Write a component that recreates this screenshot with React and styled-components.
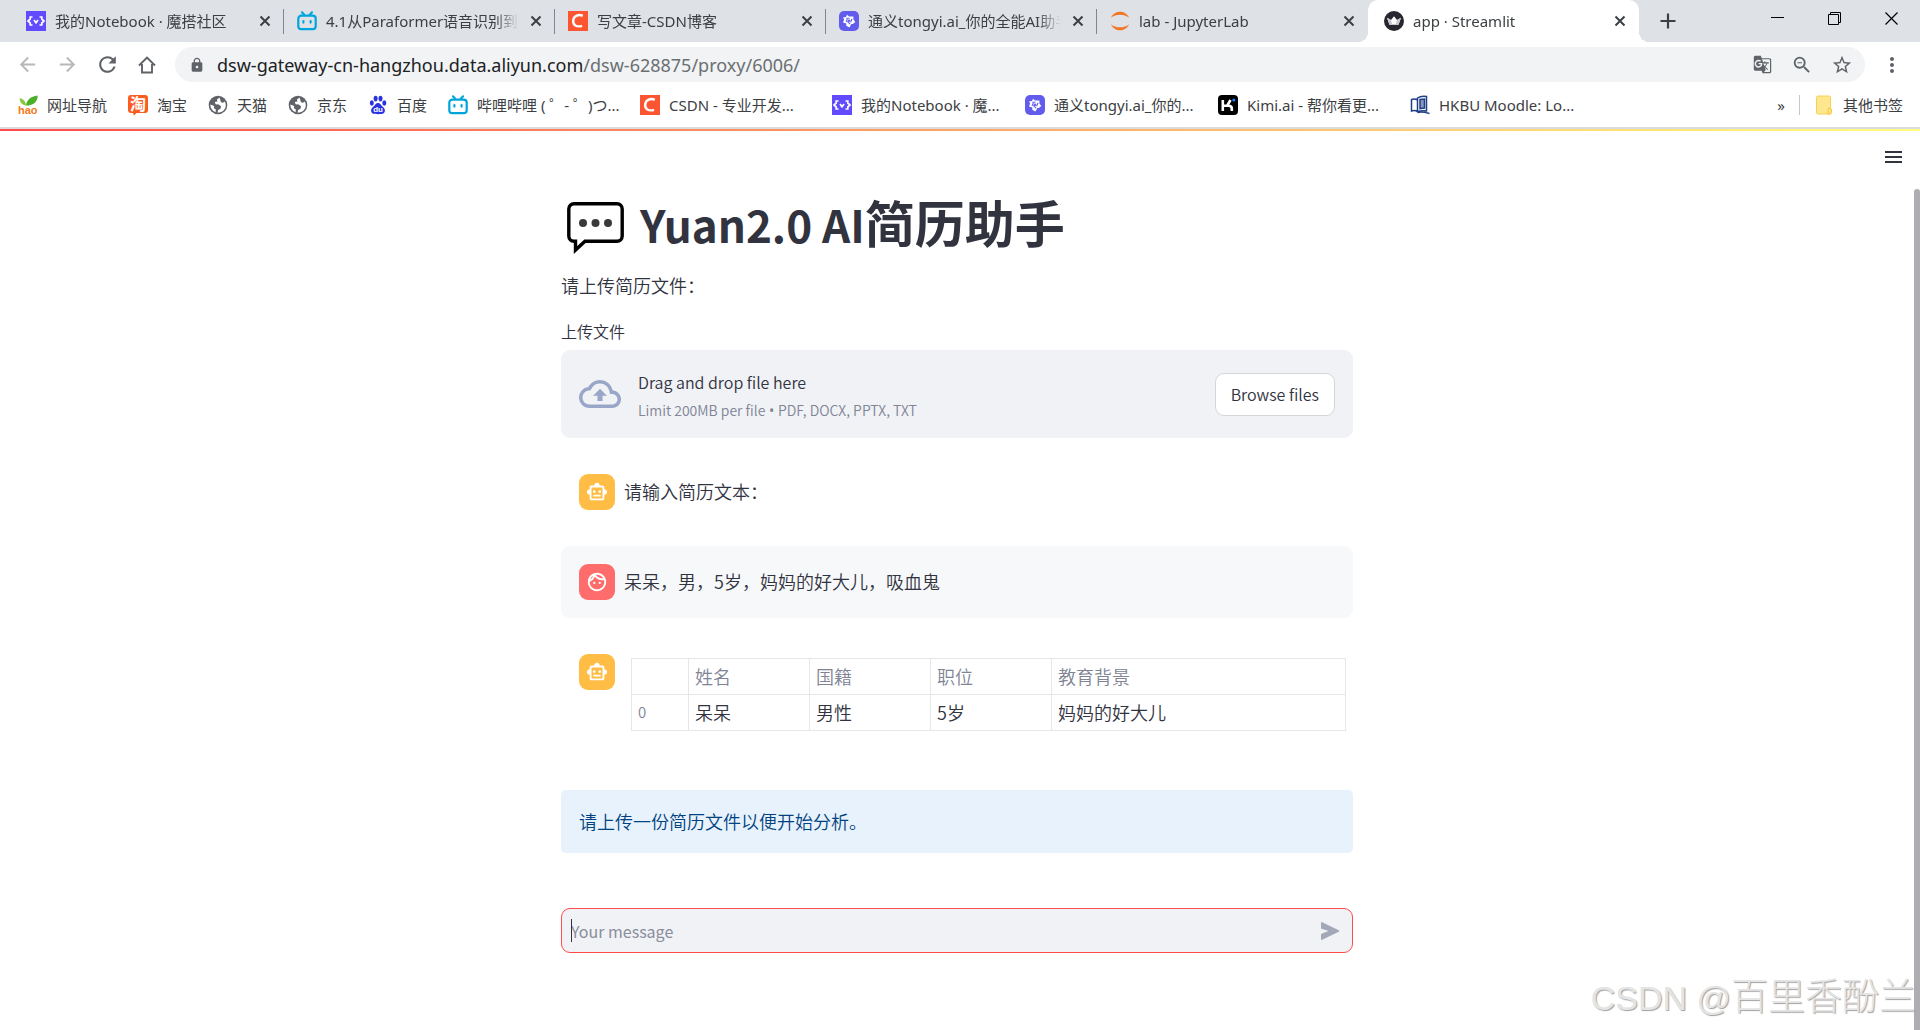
import React from "react";
import styled, { createGlobalStyle, css } from "styled-components";
import {
  MdArrowBack,
  MdArrowForward,
  MdRefresh,
  MdLock,
  MdGTranslate,
  MdZoomOut,
  MdStarBorder,
  MdMoreVert,
  MdOutlineCloudUpload,
  MdOutlineSmartToy,
  MdOutlineFace,
} from "react-icons/md";

const uiFont = '"Noto Sans", "Noto Sans CJK SC", sans-serif';
const appFont = '"Noto Sans CJK SC", sans-serif';

const GlobalStyle = createGlobalStyle`
  * { box-sizing: border-box; }
  body { margin: 0; background: #fff; font-family: ${appFont}; font-weight: 350; color: #31333f; }
  button { padding: 0; border: 0; background: none; color: inherit; font: inherit; cursor: pointer; }
  a { color: inherit; text-decoration: none; }
  svg { display: block; flex: none; overflow: visible; }
`;

/* ---------- browser chrome ---------- */

const Window = styled.div`
  position: relative;
  display: flex;
  flex-direction: column;
  min-height: 100vh;
  overflow: hidden;
`;

const TabStrip = styled.div`
  display: flex;
  align-items: stretch;
  height: 42px;
  padding-left: 13px;
  background: #dee1e6;
  font-family: ${uiFont};
  font-size: 15px;
  font-weight: 400;
  color: #3c4043;
`;

const Tab = styled.div`
  position: relative;
  display: flex;
  align-items: center;
  flex: 0 1 271px;
  min-width: 0;
  padding: 0 11px 0 13px;
  gap: 9px;
  ${(p) =>
    p.$active
      ? css`
          padding-left: 16px;
          background: #fff;
          border-radius: 10px 10px 0 0;
          &::before, &::after {
            content: "";
            position: absolute;
            bottom: 0;
            width: 10px;
            height: 10px;
          }
          &::before {
            left: -10px;
            background: radial-gradient(circle at 0 0, transparent 10px, #fff 10px);
          }
          &::after {
            right: -10px;
            background: radial-gradient(circle at 100% 0, transparent 10px, #fff 10px);
          }
        `
      : css`
          &:not(:nth-last-child(-n + 4))::after {
            content: "";
            position: absolute;
            right: 0;
            top: 9px;
            width: 1px;
            height: 25px;
            background: #80868b;
          }
        `}
`;

const TabTitle = styled.span`
  flex: 1;
  min-width: 0;
  overflow: hidden;
  white-space: nowrap;
  line-height: 24px;
  mask-image: linear-gradient(to right, #000 calc(100% - 24px), transparent);
`;

const TabClose = styled.button`
  display: grid;
  place-items: center;
  width: 16px;
  height: 16px;
`;

const NewTab = styled.button`
  display: grid;
  place-items: center;
  width: 28px;
  margin-left: 15px;
`;

const WindowControls = styled.div`
  display: flex;
  margin-left: auto;
  padding-bottom: 5px;
  color: #000;
`;

const WindowButton = styled.button`
  display: grid;
  place-items: center;
  width: 57px;
`;

const Toolbar = styled.div`
  display: flex;
  align-items: center;
  height: 45px;
  padding: 0 14px;
  color: #5f6368;
`;

const ToolButton = styled.button`
  display: grid;
  place-items: center;
  width: ${(p) => p.$width || 40}px;
  height: 28px;
  opacity: ${(p) => (p.disabled ? 0.45 : 1)};
`;

const NavButtons = styled.div`
  display: flex;
  width: 161px;
  margin-left: -7px;
`;

const AddressBar = styled.div`
  display: flex;
  align-items: center;
  flex: 1;
  height: 35px;
  margin: 0 13px 0 7px;
  padding: 0 3px 0 14px;
  border-radius: 18px;
  background: #f1f3f4;
`;

const Url = styled.div`
  flex: 1;
  margin-left: 12px;
  font-family: ${uiFont};
  font-size: 18px;
  font-weight: 400;
  line-height: 28px;
  white-space: nowrap;
  color: #6b6f73;
  b { font-weight: 400; color: #202124; }
`;

const BookmarkBar = styled.nav`
  display: flex;
  align-items: center;
  height: 42px;
  padding: 0 17px 4px 18px;
  border-bottom: 2px solid #dadce0;
  box-sizing: border-box;
  font-family: ${uiFont};
  font-size: 15px;
  font-weight: 400;
  line-height: 24px;
  color: #3c4043;
`;

const Bookmark = styled.a`
  display: flex;
  align-items: center;
  gap: 9px;
  width: ${(p) => p.$width}px;
  white-space: nowrap;
`;

const Overflow = styled.button`
  display: grid;
  place-items: center;
  width: 20px;
  margin-left: auto;
`;

const OtherBookmarks = styled.a`
  display: flex;
  align-items: center;
  gap: 11px;
  height: 20px;
  margin-left: 8px;
  padding-left: 16px;
  border-left: 1px solid #c4c7cb;
`;

/* ---------- page ---------- */

const GradientBar = styled.div`
  height: 2px;
  background: linear-gradient(90deg, #ff4b4b, #fffd80);
`;

const Viewport = styled.div`
  display: flex;
  flex: 1;
`;

const Page = styled.main`
  flex: 1;
  min-width: 0;
`;

const PageHeader = styled.header`
  display: flex;
  justify-content: flex-end;
  padding: 15px 10px 0;
  height: 60px;
`;

const MenuButton = styled.button`
  display: grid;
  place-items: center;
  width: 22px;
  height: 22px;
`;

const Scrollbar = styled.div`
  display: flex;
  width: 6px;
  padding-top: 58px;
  &::after {
    content: "";
    flex: 1;
    border-radius: 4px 4px 0 0;
    background: #adadb2;
  }
`;

const Column = styled.div`
  max-width: 792px;
  margin: 0 auto;
`;

const Title = styled.h1`
  display: flex;
  align-items: flex-end;
  gap: 16px;
  margin: 0;
  padding-left: 6px;
  font-size: 50px;
  font-weight: 700;
  line-height: 60px;
  white-space: nowrap;
`;

const Latin = styled.span`
  font-size: 44px;
`;

const Intro = styled.p`
  margin: 17px 0 20px;
  font-size: 18px;
  line-height: 28px;
`;

const UploadLabel = styled.label`
  display: block;
  margin-bottom: 7px;
  font-size: 16px;
  line-height: 24px;
`;

const DropZone = styled.section`
  display: flex;
  align-items: center;
  height: 88px;
  padding: 0 18px;
  border-radius: 9px;
  background: #f0f2f6;
  color: #98a6c8;
`;

const DropText = styled.div`
  flex: 1;
  margin-left: 17px;
  padding-top: 4px;
  color: #31333f;
  font-size: 16px;
  line-height: 28px;
  small {
    display: block;
    font-size: 14px;
    line-height: 29px;
    color: #808495;
  }
`;

const Bullet = styled.span`
  font-family: "Noto Sans", sans-serif;
  font-weight: 400;
`;

const BrowseButton = styled.button`
  height: 43px;
  padding: 0 15px;
  border: 1px solid #d5d6d9;
  border-radius: 9px;
  background: #fff;
  color: #31333f;
  font-size: 16px;
`;

const Message = styled.article`
  display: flex;
  align-items: flex-start;
  gap: 9px;
  margin-top: 18px;
  padding: 18px;
  border-radius: 9px;
  background: ${(p) => (p.$user ? "#f7f8fa" : "transparent")};
`;

const Avatar = styled.div`
  display: grid;
  place-items: center;
  flex: none;
  width: 36px;
  height: 36px;
  border-radius: 9px;
  color: #fff;
  background: ${(p) => (p.$user ? "#ff6c6c" : "#ffbd45")};
`;

const MessageText = styled.p`
  margin: 0;
  font-size: 18px;
  line-height: 34px;
`;

const Grid = styled.table`
  flex: 1;
  margin: 4px -11px 0 7px;
  border-collapse: collapse;
  table-layout: fixed;
  font-size: 18px;
  th, td {
    height: 36px;
    padding: 0 6px 2px;
    border: 1px solid #e6e6e8;
    font-weight: 350;
    line-height: 28px;
    text-align: left;
  }
  thead th { color: #808495; }
  tbody th { color: #808495; font-size: 15px; }
`;

const Info = styled.div`
  margin-top: 41px;
  padding: 17px 18px 18px;
  border-radius: 5px;
  background: #e8f2fc;
  color: #004280;
  font-size: 18px;
  line-height: 28px;
`;

const ChatForm = styled.form`
  position: relative;
  display: flex;
  align-items: center;
  height: 45px;
  margin: 55px 0 77px;
  padding: 0 11px 0 9px;
  border: 1px solid #ff4b4b;
  border-radius: 9px;
  background: #f0f2f6;
  &::before {
    content: "";
    position: absolute;
    left: 9px;
    top: 10px;
    width: 1px;
    height: 23px;
    background: #31333f;
  }
`;

const ChatInput = styled.input`
  flex: 1;
  min-width: 0;
  height: 100%;
  padding: 0;
  border: 0;
  outline: 0;
  background: none;
  font: 16px ${appFont};
  color: #31333f;
  &::placeholder { color: #8a8d9b; opacity: 1; }
`;

const Watermark = styled.div`
  position: absolute;
  right: 4px;
  bottom: 8px;
  font-family: "Liberation Sans", "Noto Sans CJK SC", sans-serif;
  font-size: 37px;
  font-weight: 300;
  line-height: 48px;
  white-space: nowrap;
  color: #e4e4e4;
  text-shadow: 1px 1px 1px #a0a0a0;
  pointer-events: none;
  span { font-size: 34px; }
`;

/* ---------- drawings ---------- */

const Notebook = () => (
  <svg width="20" height="20" viewBox="0 0 20 20" fill="none" stroke="#fff" strokeWidth="1.7">
    <rect width="20" height="20" fill="#624aff" stroke="none" />
    <path d="M6.500 6H4.200v2L2 10l2.200 2v2h2.300M13.500 6h2.300v2L18 10l-2.200 2v2h-2.300M8 9l2 2.700L12 9" />
  </svg>
);

const Bili = () => (
  <svg width="20" height="20" viewBox="0 0 20 20" fill="none" stroke="#00a5dc" strokeWidth="2.2" strokeLinecap="round">
    <rect x="1.3" y="4.6" width="17.4" height="13.6" rx="3" />
    <path d="M5 1.3l2.4 2.6M15 1.3l-2.4 2.6M6.4 10v1.6M13.6 10v1.6" />
  </svg>
);

const Csdn = () => (
  <svg width="20" height="20" viewBox="0 0 20 20" fill="none">
    <rect width="20" height="20" fill="#fc5531" />
    <path d="M14.8 4.900C11 3 5.600 4.400 5.200 9.600c-.3 5.200 4.200 6.800 8.900 5.200" stroke="#fff" strokeWidth="2.4" />
  </svg>
);

const Tongyi = () => (
  <svg width="20" height="20" viewBox="0 0 20 20" fill="none">
    <rect width="20" height="20" rx="5" fill="#615ced" />
    <path d="M8 3.800l2 1.700h4.400v3L16.300 11l-2.500 2h-1.500L10.500 16.400l-3.300-1.700.2-2.200L4 11.500l1.200-3L4 6.500l3-.5z" fill="#fff" />
    <path d="M7.300 7.200h3.200M13 7.800l-1.400 3.400M11.200 13.200l-3-2.800M7 10.800L8.400 8" stroke="#615ced" strokeWidth="1.100" />
    <circle cx="10" cy="9.800" r="1.200" fill="#615ced" />
  </svg>
);

const Jupyter = () => (
  <svg width="20" height="20" viewBox="0 0 20 20" fill="#f37726">
    <path d="M.8 6.800C3 2.600 6.200.8 10 .8s7 1.800 9.200 6C16.500 4.600 13.500 3.700 10 3.700S3.500 4.600.8 6.800z" />
    <path d="M.8 13.200c2.200 4.200 5.400 6 9.200 6s7-1.800 9.200-6c-2.700 2.200-5.700 3.100-9.200 3.100s-6.500-.9-9.200-3.100z" />
  </svg>
);

const Crown = () => (
  <svg width="20" height="20" viewBox="0 0 20 20">
    <circle cx="10" cy="10" r="10" fill="#262730" />
    <path d="M3 6.800l4 2.200 3-3.800 3 3.800 4-2.200-2.500 7h-9z" fill="#fff" />
    <path d="M3 6.800l4 2.200 1.500 4.800h-3zM17 6.800L13 9l-1.500 4.800h3z" fill="#c9c9cd" />
  </svg>
);

const Hao = () => (
  <svg width="20" height="20" viewBox="0 0 20 20">
    <path d="M8 10.500C8.600 5 12.500 1.200 19.600.4 20 6.200 15.500 10.600 8 10.500z" fill="#4caf2a" />
    <path d="M8 10.500C7.800 6.500 5.500 3.800 1.600 3.200 1.800 7.200 4 10 8 10.500z" fill="#8cc63f" />
    <text x="0" y="18.600" fontFamily="Liberation Sans, sans-serif" fontWeight="700" fontSize="11" fill="#f47a20">hao</text>
  </svg>
);

const Taobao = () => (
  <svg width="20" height="20" viewBox="0 0 20 20">
    <path d="M3 0h14a3 3 0 013 3v12a3 3 0 01-3 3H8.500L6 20.500 5 18H3a3 3 0 01-3-3V3a3 3 0 013-3z" fill="#fb5c1f" />
    <text x="2" y="14.600" fontFamily="Noto Sans CJK SC, sans-serif" fontWeight="700" fontSize="16" fill="#fff">淘</text>
  </svg>
);

const Globe = () => (
  <svg width="20" height="20" viewBox="0 0 20 20">
    <circle cx="10" cy="10" r="9.300" fill="#5f6368" />
    <path d="M11.500 2.600L9 4.500l.4 2-2.600.5.8 2.300 3.300.3 2.200 2-.8 2.300-2.200 1-.6 2.700c4.700.2 8.300-3 8.300-7.600 0-1.200-.4-2.500-1-3.500l-1.800 1.300-2-.6zM2.300 9.600c0 3.700 2 6.500 5.300 7.700l.3-2.700-2-1.400.3-2.100z" fill="#fff" />
  </svg>
);

const Baidu = () => (
  <svg width="20" height="20" viewBox="0 0 20 20" fill="#2932e1">
    <ellipse cx="3.800" cy="8" rx="2" ry="2.700" />
    <ellipse cx="7.600" cy="3.600" rx="2" ry="2.800" />
    <ellipse cx="12.500" cy="3.600" rx="2" ry="2.800" />
    <ellipse cx="16.300" cy="8" rx="2" ry="2.700" />
    <path d="M10 8c2.200 0 3 2.200 4.500 3.600 1.700 1.500 2.800 2.800 2.300 5-.6 2.600-3.200 2.600-6.800 2.600s-6.200 0-6.800-2.600c-.5-2.200.6-3.500 2.300-5C7 10.200 7.800 8 10 8z" />
    <text x="5.200" y="17.400" fontFamily="Liberation Sans, sans-serif" fontWeight="700" fontSize="8" fill="#fff">du</text>
  </svg>
);

const Kimi = () => (
  <svg width="20" height="20" viewBox="0 0 20 20" fill="none" stroke="#fff" strokeWidth="2.600">
    <rect width="20" height="20" rx="4" fill="#000" stroke="none" />
    <path d="M4.800 5v11M5 10.800h5.500c2.200 0 3.300 1 3.300 2.800V16M12.500 5L9.300 10.500" />
    <circle cx="15.800" cy="5" r="1.500" fill="#1783ff" stroke="none" />
  </svg>
);

const Hkbu = () => (
  <svg width="20" height="20" viewBox="0 0 20 20" fill="none" stroke="#1f3f86" strokeWidth="1.500">
    <path d="M7.500 16.500C5.500 15.300 3.500 15.300 1.500 16V4.500c2-.8 4-.8 6 .5M7.500 16V3c2.500-1.800 6-2 9-1.600V16c-3-.4-6-.2-9 .5zM7.500 17.500c3-1 7-.5 12 1" />
    <path d="M10 4.500l4.500-.5v9l-4.500.6z" fill="#8797c0" />
  </svg>
);

const Folder = () => (
  <svg width="16" height="20" viewBox="0 0 16 20">
    <path d="M2 1h11a1.500 1.500 0 011.500 1.500V19H2A1.500 1.500 0 01.500 17.500v-15A1.500 1.500 0 012 1z" fill="#ffe78f" stroke="#f6d155" />
    <path d="M12 13.500h2a1.500 1.500 0 011.500 1.500v2.500A1.500 1.500 0 0114 19h-2z" fill="#ffe27a" stroke="#f6c945" />
  </svg>
);

const Cross = ({ size = 10, width = 2 }) => (
  <svg width={size} height={size} viewBox={`0 0 ${size} ${size}`} stroke="currentColor" strokeWidth={width}>
    <path d={`M.500.500L${size - 0.5} ${size - 0.5}M${size - 0.5}.500L.500 ${size - 0.5}`} />
  </svg>
);

const Home = () => (
  <svg width="18" height="18" viewBox="0 0 18 18" fill="none" stroke="currentColor" strokeWidth="1.900">
    <path d="M1 9.500L9 1.500l8 8M4 8v8.500h10V8" />
  </svg>
);

const SpeechBalloon = () => (
  <svg width="57" height="52" viewBox="0 0 57 52">
    <path d="M7 1.800h43a5.200 5.200 0 015.200 5.200v27a5.200 5.200 0 01-5.200 5.200H18L8.500 48V39.200H7A5.200 5.200 0 011.800 34V7A5.200 5.200 0 017 1.800z" fill="#fff" stroke="#000" strokeWidth="3.400" />
    <g fill="#3a3a3a">
      <circle cx="16" cy="21" r="4" />
      <circle cx="28.500" cy="21" r="4" />
      <circle cx="41" cy="21" r="4" />
    </g>
  </svg>
);

const tabs = [
  { title: "我的Notebook · 魔搭社区", icon: Notebook },
  { title: "4.1从Paraformer语音识别到", icon: Bili },
  { title: "写文章-CSDN博客", icon: Csdn },
  { title: "通义tongyi.ai_你的全能AI助手", icon: Tongyi },
  { title: "lab - JupyterLab", icon: Jupyter },
  { title: "app · Streamlit", icon: Crown, active: true },
];

const bookmarks = [
  { label: "网址导航", icon: Hao, width: 110 },
  { label: "淘宝", icon: Taobao, width: 80 },
  { label: "天猫", icon: Globe, width: 80 },
  { label: "京东", icon: Globe, width: 80 },
  { label: "百度", icon: Baidu, width: 80 },
  { label: "哔哩哔哩 ( ゜- ゜)つ...", icon: Bili, width: 192 },
  { label: "CSDN - 专业开发...", icon: Csdn, width: 192 },
  { label: "我的Notebook · 魔...", icon: Notebook, width: 193 },
  { label: "通义tongyi.ai_你的...", icon: Tongyi, width: 193 },
  { label: "Kimi.ai - 帮你看更...", icon: Kimi, width: 192 },
  { label: "HKBU Moodle: Lo...", icon: Hkbu, width: 192 },
];

const columns = ["姓名", "国籍", "职位", "教育背景"];
const rows = [["呆呆", "男性", "5岁", "妈妈的好大儿"]];

const BotAvatar = () => (
  <Avatar><MdOutlineSmartToy size={22} /></Avatar>
);

export default function App() {
  return (
    <Window>
      <GlobalStyle />
      <TabStrip>
        {tabs.map(({ title, icon: Icon, active }) => (
          <Tab key={title} $active={active}>
            <Icon />
            <TabTitle>{title}</TabTitle>
            <TabClose aria-label="Close tab"><Cross /></TabClose>
          </Tab>
        ))}
        <NewTab aria-label="New tab">
          <svg width="16" height="16" viewBox="0 0 16 16" stroke="currentColor" strokeWidth="2.200">
            <path d="M8 .500v15M.500 8h15" />
          </svg>
        </NewTab>
        <WindowControls>
          <WindowButton aria-label="Minimize">
            <svg width="13" height="13" viewBox="0 0 13 13" stroke="currentColor"><path d="M0 5.500h13" /></svg>
          </WindowButton>
          <WindowButton aria-label="Restore">
            <svg width="13" height="13" viewBox="0 0 13 13" stroke="currentColor" fill="none">
              <path d="M.500 2.500h10v10h-10zM2.500 2.500v-2h10v10h-2" />
            </svg>
          </WindowButton>
          <WindowButton aria-label="Close"><Cross size={13} width={1.2} /></WindowButton>
        </WindowControls>
      </TabStrip>

      <Toolbar>
        <NavButtons>
          <ToolButton disabled aria-label="Back"><MdArrowBack size={23} /></ToolButton>
          <ToolButton disabled aria-label="Forward"><MdArrowForward size={23} /></ToolButton>
          <ToolButton aria-label="Reload"><MdRefresh size={25} /></ToolButton>
          <ToolButton aria-label="Home"><Home /></ToolButton>
        </NavButtons>
        <AddressBar>
          <MdLock size={16} />
          <Url><b>dsw-gateway-cn-hangzhou.data.aliyun.com</b>/dsw-628875/proxy/6006/</Url>
          <ToolButton aria-label="Translate"><MdGTranslate size={19} /></ToolButton>
          <ToolButton aria-label="Zoom"><MdZoomOut size={22} /></ToolButton>
          <ToolButton aria-label="Bookmark"><MdStarBorder size={22} /></ToolButton>
        </AddressBar>
        <ToolButton $width={28} aria-label="Menu"><MdMoreVert size={24} /></ToolButton>
      </Toolbar>

      <BookmarkBar>
        {bookmarks.map(({ label, icon: Icon, width }) => (
          <Bookmark key={label} href="#" $width={width}><Icon />{label}</Bookmark>
        ))}
        <Overflow aria-label="More bookmarks">»</Overflow>
        <OtherBookmarks href="#"><Folder />其他书签</OtherBookmarks>
      </BookmarkBar>

      <GradientBar />
      <Viewport>
        <Page>
          <PageHeader>
            <MenuButton aria-label="Main menu">
              <svg width="17" height="12" viewBox="0 0 17 12" stroke="#31333f" strokeWidth="1.800">
                <path d="M0 1h17M0 6h17M0 11h17" />
              </svg>
            </MenuButton>
          </PageHeader>
          <Column>
            <Title>
              <SpeechBalloon />
              <span><Latin>Yuan2.0 AI</Latin>简历助手</span>
            </Title>
            <Intro>请上传简历文件：</Intro>
            <UploadLabel htmlFor="browse">上传文件</UploadLabel>
            <DropZone>
              <MdOutlineCloudUpload size={42} />
              <DropText>
                Drag and drop file here
                <small>Limit 200MB per file<Bullet> • </Bullet>PDF, DOCX, PPTX, TXT</small>
              </DropText>
              <BrowseButton id="browse">Browse files</BrowseButton>
            </DropZone>
            <Message>
              <BotAvatar />
              <MessageText>请输入简历文本：</MessageText>
            </Message>
            <Message $user>
              <Avatar $user><MdOutlineFace size={22} /></Avatar>
              <MessageText>呆呆，男，5岁，妈妈的好大儿，吸血鬼</MessageText>
            </Message>
            <Message>
              <BotAvatar />
              <Grid>
                <colgroup>
                  <col width="57" />
                  <col width="121" />
                  <col width="121" />
                  <col width="121" />
                  <col />
                </colgroup>
                <thead>
                  <tr>
                    <th aria-label="Index" />
                    {columns.map((c) => <th key={c} scope="col">{c}</th>)}
                  </tr>
                </thead>
                <tbody>
                  {rows.map((row, i) => (
                    <tr key={i}>
                      <th scope="row">{i}</th>
                      {row.map((cell) => <td key={cell}>{cell}</td>)}
                    </tr>
                  ))}
                </tbody>
              </Grid>
            </Message>
            <Info role="status">请上传一份简历文件以便开始分析。</Info>
            <ChatForm onSubmit={(e) => e.preventDefault()}>
              <ChatInput aria-label="Your message" placeholder="Your message" />
              <ToolButton $width={22} aria-label="Send">
                <svg width="20" height="20" viewBox="0 0 20 20" fill="#a3a8b8">
                  <path d="M2.200 1.200L18.700 9.200a.9.900 0 010 1.600L2.200 18.800A.9.900 0 011 18V13l7.500-3L1 7.500V2a.9.900 0 011.200-.8z" />
                </svg>
              </ToolButton>
            </ChatForm>
          </Column>
        </Page>
        <Scrollbar />
      </Viewport>
      <Watermark><span>CSDN @</span>百里香酚兰</Watermark>
    </Window>
  );
}
